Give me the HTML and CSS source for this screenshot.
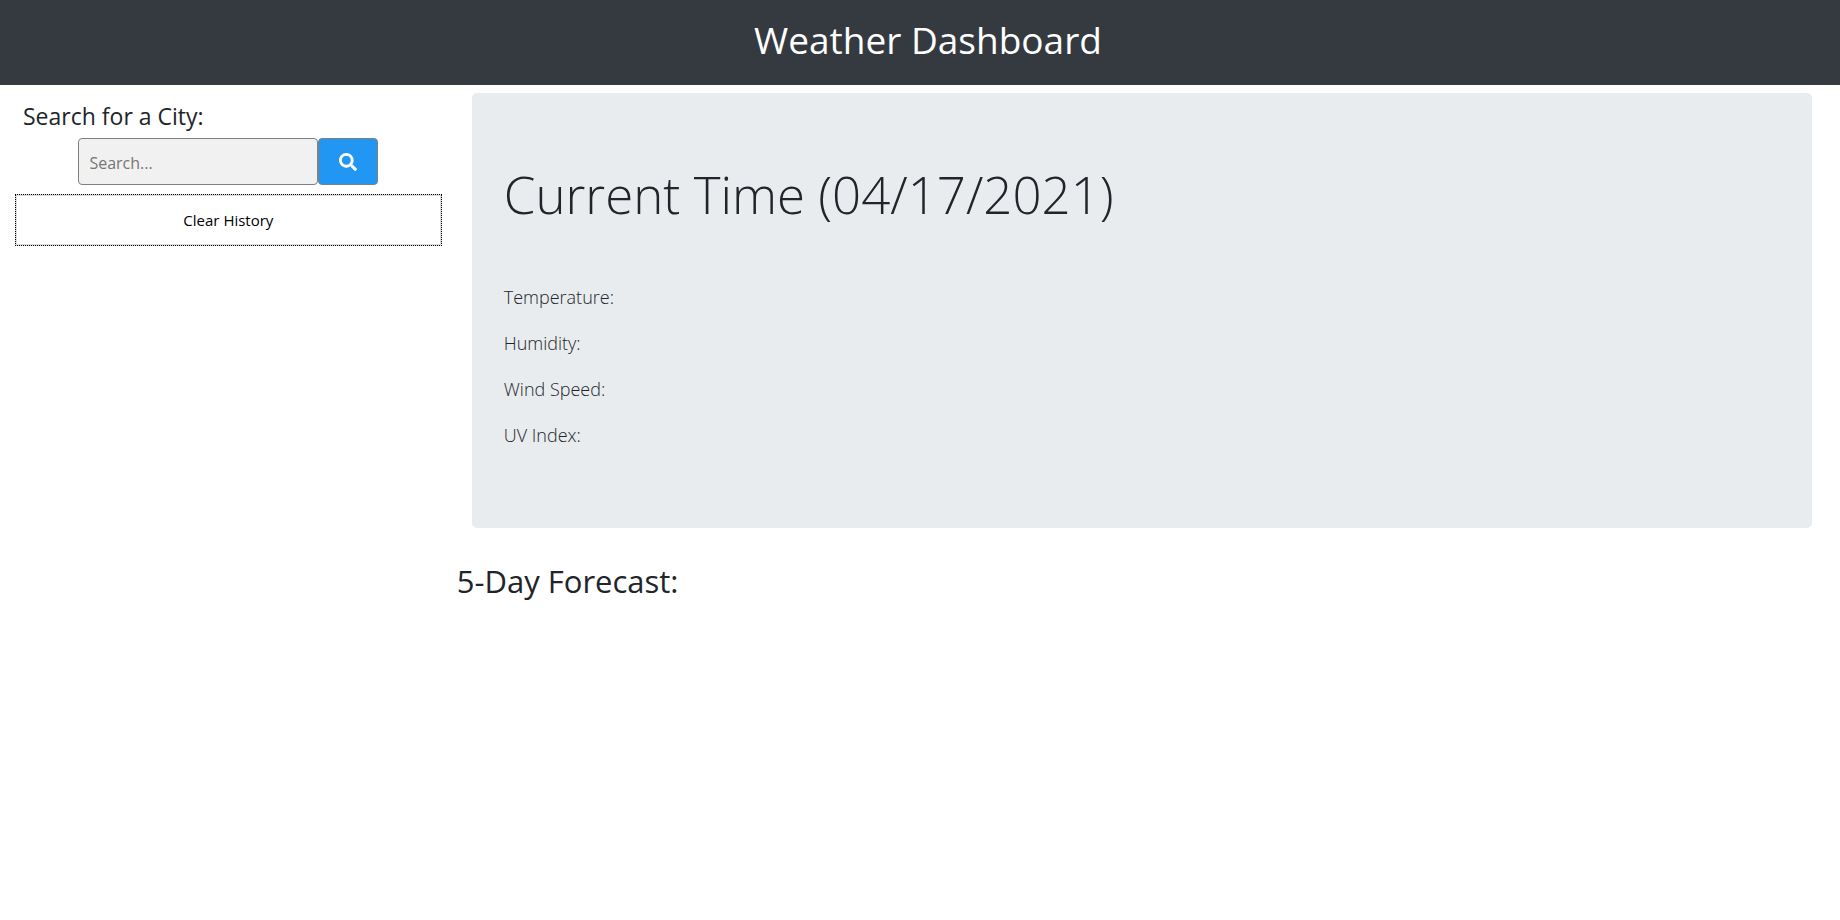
FILE: index.html
```html
<!DOCTYPE html>
<html lang="en">
<head>
<meta charset="utf-8">
<meta name="viewport" content="width=device-width, initial-scale=1">
<title>Weather Dashboard</title>
<link rel="stylesheet" href="styles.css">
</head>
<body>
<header class="site-header">
  <h1 class="site-title">Weather Dashboard</h1>
</header>
<div class="layout">
  <aside class="sidebar">
    <label class="search-label" for="city">Search for a City:</label>
    <form class="search-form">
      <input class="search-input" id="city" type="text" placeholder="Search...">
      <button class="search-button" type="button" aria-label="Search">
        <svg class="search-icon" viewBox="0 0 512 512" aria-hidden="true"><path fill="currentColor" d="M505 442.700L405.300 343c-4.500-4.500-10.600-7-17-7H372c27.600-35.300 44-79.700 44-128C416 93.100 322.900 0 208 0S0 93.100 0 208s93.100 208 208 208c48.300 0 92.700-16.400 128-44v16.300c0 6.400 2.500 12.500 7 17l99.700 99.700c9.400 9.400 24.600 9.400 33.900 0l28.300-28.300c9.400-9.400 9.400-24.600.1-34zM208 336c-70.700 0-128-57.200-128-128 0-70.700 57.200-128 128-128 70.700 0 128 57.200 128 128 0 70.700-57.200 128-128 128z"/></svg>
      </button>
    </form>
    <button class="clear-button" type="button">Clear History</button>
  </aside>
  <main class="content">
    <section class="current">
      <h2 class="current-title">Current Time (04/17/2021)</h2>
      <p class="reading">Temperature:</p>
      <p class="reading">Humidity:</p>
      <p class="reading">Wind Speed:</p>
      <p class="reading">UV Index:</p>
    </section>
    <h2 class="forecast-title">5-Day Forecast:</h2>
  </main>
</div>
</body>
</html>
```
FILE: styles.css
```css
* {
  box-sizing: border-box;
}

body {
  margin: 0;
  background: #fff;
  color: #212529;
  font-family: "Segoe UI", "Open Sans", "Noto Sans", sans-serif;
  font-size: 16px;
  line-height: 24px;
}

h1, h2, p {
  margin: 0;
}

.site-header {
  padding: 16px 0 21px 16px;
  background: #343a40;
  color: #fff;
  text-align: center;
}

.site-title {
  font-size: 37px;
  font-weight: 400;
  line-height: 48px;
}

.layout {
  display: grid;
  grid-template-columns: 1fr 3fr;
  padding: 8px 13px 0 0;
}

.sidebar {
  padding: 8px 15px;
}

.search-label {
  display: block;
  padding-left: 8px;
  font-size: 23px;
  line-height: 31px;
}

.search-form {
  display: grid;
  grid-template-columns: 4fr 1fr;
  width: 300px;
  max-width: 100%;
  margin: 6px auto 9px;
}

.search-input,
.search-button {
  height: 47px;
  border: 1px solid #808080;
  border-radius: 4px;
}

.search-input {
  min-width: 0;
  padding: 11px 10px 9px;
  background: #f1f1f1;
  color: #212529;
  font: inherit;
}

.search-input::placeholder {
  color: #757575;
}

.search-button {
  display: grid;
  place-items: center;
  background: #2196f3;
  color: #fff;
  cursor: pointer;
}

.search-icon {
  width: 18px;
  height: 18px;
}

.clear-button {
  width: 100%;
  height: 52px;
  border: 2px solid #ddd;
  outline: 1px dotted #000;
  outline-offset: -1px;
  background: #fff;
  color: #000;
  font: inherit;
  font-size: 15px;
  cursor: pointer;
}

.current {
  margin: 0 15px 32px;
  padding: 64px 32px 62px;
  border-radius: 5px;
  background: #e9ecef;
}

.current-title {
  margin-bottom: 50px;
  font-size: 51px;
  font-weight: 300;
  line-height: 75px;
}

.reading {
  margin-bottom: 16px;
  font-size: 18px;
  font-weight: 300;
  line-height: 30px;
}

.forecast-title {
  font-size: 31px;
  font-weight: 400;
  line-height: 42px;
}
```
